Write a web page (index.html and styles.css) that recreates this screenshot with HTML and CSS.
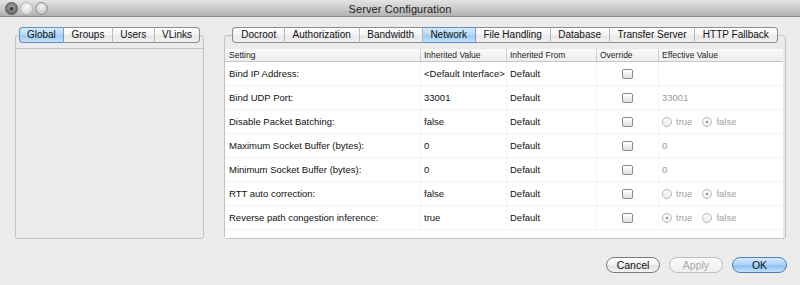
FILE: index.html
```html
<!DOCTYPE html>
<html>
<head>
<meta charset="utf-8">
<link rel="stylesheet" href="styles.css">
</head>
<body>
<div class="window">
  <div class="titlebar">
    <div class="lights">
      <span class="light close"></span>
      <span class="light mid"></span>
      <span class="light"></span>
    </div>
    <div class="title">Server Configuration</div>
    <div></div>
  </div>
  <div class="content">
    <div class="pane left">
      <div class="tabs">
        <span class="tab sel first">Global</span><span class="tab">Groups</span><span class="tab">Users</span><span class="tab last">VLinks</span>
      </div>
      <div class="box">
        <div class="inner"></div>
      </div>
    </div>
    <div class="pane right">
      <div class="tabs">
        <span class="tab first">Docroot</span><span class="tab">Authorization</span><span class="tab">Bandwidth</span><span class="tab sel">Network</span><span class="tab">File Handling</span><span class="tab">Database</span><span class="tab">Transfer Server</span><span class="tab last">HTTP Fallback</span>
      </div>
      <div class="box">
        <div class="table">
          <div class="grid head">
            <div class="h">Setting</div>
            <div class="h">Inherited Value</div>
            <div class="h">Inherited From</div>
            <div class="h">Override</div>
            <div class="h lasth">Effective Value</div>
          </div>
          <div class="grid body">
            <div class="c">Bind IP Address:</div>
            <div class="c">&lt;Default Interface&gt;</div>
            <div class="c">Default</div>
            <div class="c ctr"><span class="cb"></span></div>
            <div class="c eff"></div>

            <div class="c">Bind UDP Port:</div>
            <div class="c">33001</div>
            <div class="c">Default</div>
            <div class="c ctr"><span class="cb"></span></div>
            <div class="c eff dim">33001</div>

            <div class="c">Disable Packet Batching:</div>
            <div class="c">false</div>
            <div class="c">Default</div>
            <div class="c ctr"><span class="cb"></span></div>
            <div class="c eff"><span class="rb"></span><span class="rl">true</span><span class="rb on"></span><span class="rl">false</span></div>

            <div class="c">Maximum Socket Buffer (bytes):</div>
            <div class="c">0</div>
            <div class="c">Default</div>
            <div class="c ctr"><span class="cb"></span></div>
            <div class="c eff dim">0</div>

            <div class="c">Minimum Socket Buffer (bytes):</div>
            <div class="c">0</div>
            <div class="c">Default</div>
            <div class="c ctr"><span class="cb"></span></div>
            <div class="c eff dim">0</div>

            <div class="c">RTT auto correction:</div>
            <div class="c">false</div>
            <div class="c">Default</div>
            <div class="c ctr"><span class="cb"></span></div>
            <div class="c eff"><span class="rb"></span><span class="rl">true</span><span class="rb on"></span><span class="rl">false</span></div>

            <div class="c">Reverse path congestion inference:</div>
            <div class="c">true</div>
            <div class="c">Default</div>
            <div class="c ctr"><span class="cb"></span></div>
            <div class="c eff"><span class="rb on"></span><span class="rl">true</span><span class="rb"></span><span class="rl">false</span></div>
          </div>
        </div>
      </div>
    </div>
  </div>
  <div class="buttons">
    <span class="btn">Cancel</span>
    <span class="btn disabled">Apply</span>
    <span class="btn ok">OK</span>
  </div>
</div>
</body>
</html>
```

FILE: styles.css
```css
html, body {
  margin: 0;
  padding: 0;
}
body {
  background: #ececec;
  font-family: "Liberation Sans", Arial, sans-serif;
  color: #111;
  width: 800px;
  height: 285px;
  overflow: hidden;
}
.window {
  width: 800px;
  height: 285px;
  display: flex;
  flex-direction: column;
}
.titlebar {
  height: 16px;
  border-bottom: 1px solid #8a8a8a;
  background: linear-gradient(#e4e4e4, #c8c8c8 60%, #b0b0b0);
  display: grid;
  grid-template-columns: 1fr auto 1fr;
  align-items: center;
}
.lights {
  display: flex;
  gap: 2px;
  padding-left: 5px;
}
.light {
  width: 13px;
  height: 13px;
  border-radius: 50%;
  box-sizing: border-box;
  border: 1px solid #8c8c8c;
  background: radial-gradient(circle at 50% 35%, #f4f4f4, #c8c8c8 70%, #a8a8a8);
  position: relative;
}
.light.close {
  background: radial-gradient(circle at 50% 35%, #a0a0a0, #707070 70%, #585858);
  border-color: #555;
}
.light.close::after {
  content: "";
  position: absolute;
  left: 4px;
  top: 4px;
  width: 3px;
  height: 3px;
  border-radius: 50%;
  background: #2e2e2e;
}
.light.mid {
  border-color: #b4b4b4;
  background: radial-gradient(circle at 50% 35%, #f8f8f8, #dcdcdc 70%, #c8c8c8);
}
.title {
  font-size: 11px;
  color: #222;
  padding-top: 1px;
  letter-spacing: 0.1px;
}
.content {
  display: flex;
  gap: 20px;
  padding: 10px 14px 0 15px;
  height: 212px;
}
.pane {
  display: flex;
  flex-direction: column;
}
.pane.left { width: 189px; }
.pane.right { width: 562px; }
.tabs {
  align-self: center;
  display: flex;
  height: 16px;
  position: relative;
  z-index: 1;
}
.tab {
  box-sizing: border-box;
  height: 16px;
  font-size: 10px;
  line-height: 14px;
  padding: 0 7.7px;
  border-top: 1px solid #8e8e8e;
  border-bottom: 1px solid #8e8e8e;
  border-right: 1px solid #b8b8b8;
  background: linear-gradient(#ffffff, #f4f4f4 50%, #e6e6e6 55%, #f2f2f2);
  color: #111;
  white-space: nowrap;
}
.left .tab { padding: 0 7.4px; }
.tab.first {
  border-left: 1px solid #8e8e8e;
  border-radius: 4px 0 0 4px;
}
.tab.last {
  border-right: 1px solid #8e8e8e;
  border-radius: 0 4px 4px 0;
}
.tab.sel {
  background: linear-gradient(#d6ebfc, #b2d8f7 50%, #9ccbf3 55%, #c4e2fb);
  border-top-color: #5f8fc4;
  border-bottom-color: #5f8fc4;
  border-right-color: #6f9dcf;
}
.tab.sel.first {
  border-left-color: #5f8fc4;
}
.box {
  margin-top: -8px;
  flex: 1;
  border: 1px solid #c2c2c2;
  border-radius: 3px;
  background: #ebebeb;
  padding: 13px 2px 0 0;
  display: flex;
  flex-direction: column;
}
.left .box {
  padding: 12px 0 0 0;
}
.inner {
  flex: 1;
  border-top: 1px solid #c4c4c4;
}
.table {
  flex: 1;
  background: #fff;
  font-size: 9.5px;
}
.grid {
  display: grid;
  grid-template-columns: 196px 86px 90px 62px 124px;
}
.head {
  height: 12px;
  background: linear-gradient(#fafafa, #eeeeee);
  border-bottom: 1px solid #c6c6c6;
  font-size: 8.5px;
  color: #222;
}
.h {
  padding-left: 3px;
  line-height: 12px;
  border-right: 1px solid #cfcfcf;
  white-space: nowrap;
}
.h:first-child { padding-left: 4px; }
.h.lasth { border-right: none; }
.body {
  grid-auto-rows: 24px;
}
.c {
  display: flex;
  align-items: center;
  padding-left: 3px;
  white-space: nowrap;
  border-right: 1px dotted #ececec;
  border-bottom: 1px dotted #ececec;
  box-sizing: border-box;
}
.body .c:nth-child(5n+1) { padding-left: 4px; }
.body .c:nth-child(5n) { border-right: none; }
.c.ctr {
  justify-content: center;
  padding-left: 0;
}
.c.eff { padding-left: 3px; }
.dim { color: #9a9a9a; }
.cb {
  width: 11px;
  height: 10px;
  box-sizing: border-box;
  border: 1px solid #8a8a8a;
  border-radius: 2px;
  background: linear-gradient(#ffffff, #f0f0f0 50%, #e2e2e2);
}
.rb {
  width: 10px;
  height: 10px;
  box-sizing: border-box;
  border-radius: 50%;
  border: 1px solid #b8b8b8;
  background: linear-gradient(#fdfdfd, #ececec);
  position: relative;
}
.rb.on::after {
  content: "";
  position: absolute;
  left: 3px;
  top: 3px;
  width: 2px;
  height: 2px;
  border-radius: 50%;
  background: #6a6a6a;
}
.rl {
  color: #a0a0a0;
  margin-left: 4px;
  margin-right: 10px;
}
.buttons {
  display: flex;
  justify-content: flex-end;
  gap: 9px;
  padding-right: 13px;
  margin-top: 18px;
}
.btn {
  box-sizing: border-box;
  width: 54px;
  height: 16px;
  border: 1px solid #7a7a7a;
  border-radius: 8px;
  background: linear-gradient(#ffffff, #f2f2f2 50%, #e2e2e2 55%, #f4f4f4);
  font-size: 10.5px;
  line-height: 14px;
  text-align: center;
  color: #111;
}
.btn.disabled {
  border-color: #bdbdbd;
  color: #a8a8a8;
  background: linear-gradient(#fafafa, #f0f0f0);
}
.btn.ok {
  width: 55px;
  border-color: #4f7fb5;
  background: linear-gradient(#d4eafc, #a9d2f6 50%, #8cc2f1 55%, #bfe0fb);
}
```
